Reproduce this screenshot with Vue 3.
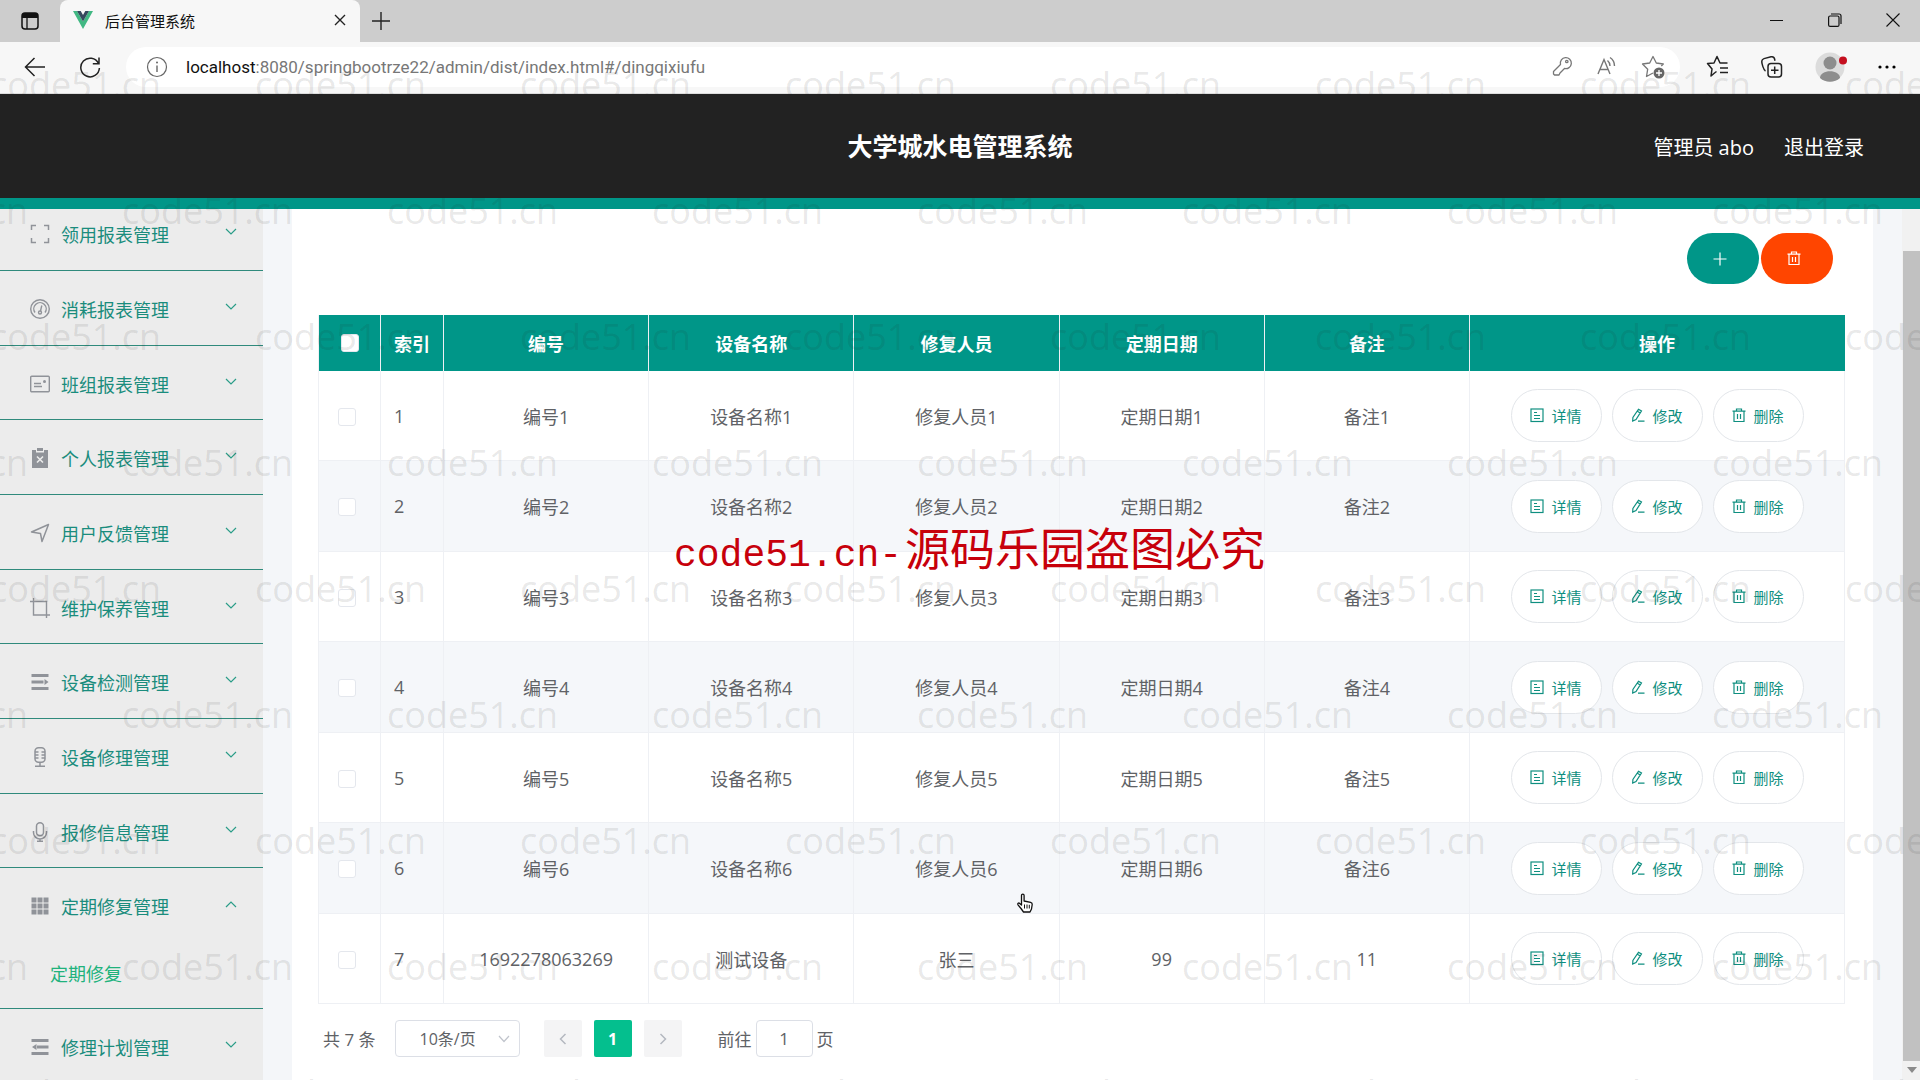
<script setup>
import { ref } from 'vue'

const menus = [
  { icon: 'full', label: '领用报表管理' },
  { icon: 'meter', label: '消耗报表管理' },
  { icon: 'card', label: '班组报表管理' },
  { icon: 'release', label: '个人报表管理' },
  { icon: 'send', label: '用户反馈管理' },
  { icon: 'crop', label: '维护保养管理' },
  { icon: 'unfold', label: '设备检测管理' },
  { icon: 'mic', label: '设备修理管理' },
  { icon: 'voice', label: '报修信息管理' },
  { icon: 'grid', label: '定期修复管理', children: ['定期修复'] },
  { icon: 'fold', label: '修理计划管理' },
]

const icons = {
  full: '<path d="M1.500 6V1.500H6M14 1.500h4.500V6M18.500 14v4.500H14M6 18.500H1.500V14" fill="none" stroke="currentColor" stroke-width="1.500"/>',
  meter: '<g fill="none" stroke="currentColor" stroke-width="1.400"><circle cx="10" cy="10" r="9.300"/><path d="M5 13.500a6.200 6.200 0 1 1 10 0M10.500 12l1.300-5.500"/><circle cx="10" cy="13.500" r="1.500"/></g>',
  card: '<g fill="none" stroke="currentColor" stroke-width="1.400"><rect x=".7" y="2.200" width="18.600" height="15.600" rx="1"/><path d="M4 9.500h7M4 12.500h8"/></g><circle cx="14.500" cy="7.500" r="1.500" fill="currentColor"/>',
  release: '<path d="M2 2h4v2.500h8V2h4v18H2zM7 0h6v3H7z" fill="currentColor"/><path d="M7 8.500l6 6M13 8.500l-6 6" stroke="#ececec" stroke-width="1.600"/>',
  send: '<path d="M18.500 1.500L1.500 9l9 1.500 1.500 8z" fill="none" stroke="currentColor" stroke-width="1.500" stroke-linejoin="round"/>',
  crop: '<path d="M0 3.500h16.500V20M3.500 0v17H20" fill="none" stroke="currentColor" stroke-width="1.400"/>',
  unfold: '<path d="M1.500 2h17v3h-17zM1.500 8.500h12v3h-12zM1.500 15h17v3h-17zM14.500 7l4 3-4 3z" fill="currentColor"/>',
  mic: '<g fill="none" stroke="currentColor" stroke-width="1.500"><rect x="5" y=".8" width="10" height="14.500" rx="3.500"/><path d="M5 5h3.500M11.500 5H15M5 8h3.500M11.500 8H15M5 11h3.500M11.500 11H15M10 15.500v4M5 19.300h10"/></g>',
  voice: '<g fill="none" stroke="currentColor" stroke-width="1.500"><rect x="6.500" y=".8" width="7" height="13" rx="3.500"/><path d="M3.500 9v1.500a6.500 6.500 0 0 0 13 0V9M10 17v2.500M7 19.300h6"/></g>',
  grid: '<path d="M1.500 1.500h5v5h-5zM7.500 1.500h5v5h-5zM13.500 1.500h5v5h-5zM1.500 7.500h5v5h-5zM7.500 7.500h5v5h-5zM13.500 7.500h5v5h-5zM1.500 13.500h5v5h-5zM7.500 13.500h5v5h-5zM13.500 13.500h5v5h-5z" fill="currentColor"/>',
  fold: '<path d="M1.500 2h17v3h-17zM7 8.500h11.500v3H7zM1.500 15h17v3h-17zM6.500 7v6L2 10z" fill="currentColor"/>',
  detail: '<g fill="none" stroke="currentColor" stroke-width="1.200"><rect x="1" y="1" width="12" height="12.500"/><path d="M4 4.500h3M4 7.500h6M4 10.500h6"/></g>',
  edit: '<g fill="none" stroke="currentColor" stroke-width="1.200"><path d="M7.500 1.200l3 1.700-5.500 8.600L1.700 13l.2-3.500zM6.300 3.200l3 1.800M7 13.200h6.500"/></g>',
  trash: '<g fill="none" stroke="currentColor" stroke-width="1.200"><path d="M.5 3.200h13M4.500 3V1h5v2M2 3.500v10h10v-10M5.500 6v5M8.500 6v5"/></g>',
}

const columns = ['编号', '设备名称', '修复人员', '定期日期', '备注']
const rows = [1, 2, 3, 4, 5, 6].map((n) => columns.map((c) => c + n))
rows.push(['1692278063269', '测试设备', '张三', '99', '11'])

const actions = [
  { icon: 'detail', label: '详情' },
  { icon: 'edit', label: '修改' },
  { icon: 'trash', label: '删除' },
]
const pageNo = ref('1')
</script>

<template>
  <div class="window">
    <div class="tabbar">
      <button class="bare tab-menu" aria-label="标签页菜单">
        <svg width="20" height="20" viewBox="0 0 20 20"><rect x="2" y="2" width="16" height="16" rx="3" fill="none" stroke="#111" stroke-width="1.500" /><path d="M2 7V4.500A2.500 2.500 0 0 1 4.500 2h11A2.500 2.500 0 0 1 18 4.500V7z" fill="#111" /><path d="M7 7v11" stroke="#111" stroke-width="1.300" /></svg>
      </button>
      <div class="tab">
        <svg width="20" height="18" viewBox="0 0 20 18"><path d="M0 0h4l6 10.500L16 0h4L10 18z" fill="#41b883" /><path d="M4 0h3.700L10 4l2.300-4H16l-6 10.500z" fill="#35495e" /></svg>
        <span class="tab-title">后台管理系统</span>
        <button class="bare" aria-label="关闭标签页">
          <svg width="12" height="12" viewBox="0 0 12 12"><path d="M1 1l10 10M11 1L1 11" stroke="#222" stroke-width="1.400" /></svg>
        </button>
      </div>
      <button class="bare new-tab" aria-label="新建标签页">
        <svg width="18" height="18" viewBox="0 0 18 18"><path d="M9 0v18M0 9h18" stroke="#222" stroke-width="1.400" /></svg>
      </button>
      <div class="win-controls">
        <button class="bare" aria-label="最小化"><svg width="14" height="14" viewBox="0 0 14 14"><path d="M0 7.500h13" stroke="#111" /></svg></button>
        <button class="bare" aria-label="还原"><svg width="14" height="14" viewBox="0 0 14 14"><g fill="none" stroke="#111" stroke-width="1.200"><rect x=".6" y="3" width="10.400" height="10.400" rx="1.500" /><path d="M3 1h8a2 2 0 0 1 2 2v8" /></g></svg></button>
        <button class="bare" aria-label="关闭"><svg width="14" height="14" viewBox="0 0 14 14"><path d="M.5.5l13 13M13.500.5l-13 13" stroke="#111" stroke-width="1.100" /></svg></button>
      </div>
    </div>

    <div class="toolbar">
      <button class="bare nav" aria-label="后退"><svg width="22" height="22" viewBox="0 0 22 22"><path d="M21 11H2M10.500 2L1.500 11l9 9" fill="none" stroke="#222" stroke-width="1.500" /></svg></button>
      <button class="bare nav" aria-label="刷新"><svg width="22" height="22" viewBox="0 0 22 22"><path d="M19.500 7.500a9.300 9.300 0 1 0 .9 4.500M20 1.500v6.200h-6.200" fill="none" stroke="#222" stroke-width="1.500" /></svg></button>
      <div class="address">
        <svg width="22" height="22" viewBox="0 0 22 22"><circle cx="11" cy="11" r="9.500" fill="none" stroke="#666" stroke-width="1.200" /><path d="M11 9.500V16" stroke="#666" stroke-width="1.400" /><circle cx="11" cy="6.500" r="1" fill="#666" /></svg>
        <span class="url"><b>localhost</b>:8080/springbootrze22/admin/dist/index.html#/dingqixiufu</span>
        <div class="address-icons">
          <svg width="22" height="22" viewBox="0 0 22 22"><g fill="none" stroke="#777" stroke-width="1.300"><path d="M9.500 9.500a5.500 5.500 0 1 1 4 4L9 18l-1 2H3.500l-1-1v-2.500z" stroke-linejoin="round" /><circle cx="15.800" cy="6.500" r="1.200" /></g></svg>
          <svg width="22" height="22" viewBox="0 0 22 22"><g fill="none" stroke="#777" stroke-width="1.400"><path d="M2 19L8 4.500 14 19M4 14.500h8M11.500 5.500a7 7 0 0 1 2.500 5.500M14 2.500A10 10 0 0 1 18.500 11" /></g></svg>
          <svg width="24" height="24" viewBox="0 0 24 24"><path d="M12 18l-6.500 3.500 1.200-7.300L1.500 9l7.200-1L12 1.500 15.300 8l7 1-2 2" fill="none" stroke="#777" stroke-width="1.300" stroke-linejoin="round" /><circle cx="18" cy="18" r="5.500" fill="#666" /><path d="M18 15v6M15 18h6" stroke="#fff" stroke-width="1.300" /></svg>
        </div>
      </div>
      <div class="browser-icons">
        <button class="bare" aria-label="收藏夹"><svg width="24" height="24" viewBox="0 0 24 24"><path d="M8.500 18L5 21l1-7L1.500 8.500 8 8l3-6.500L14 8h7.500M14 13h8M14 17.500h8M8.500 18l2-1.500" fill="none" stroke="#222" stroke-width="1.500" stroke-linejoin="round" /></svg></button>
        <button class="bare" aria-label="集锦"><svg width="24" height="24" viewBox="0 0 24 24"><g fill="none" stroke="#222" stroke-width="1.500"><rect x="8" y="8.500" width="13.500" height="13.500" rx="3" /><path d="M14.700 11.500v7.500M11 15.200h7.500M5.500 16C3.500 15 1.500 8 1.800 6c.2-1.500 1-2 2.200-2.400L11 1.800c2-.4 3.200.5 3.500 2l.5 2" /></g></svg></button>
        <button class="bare" aria-label="个人资料"><svg width="34" height="32" viewBox="0 0 34 32"><circle cx="16" cy="16" r="14.500" fill="#dcdcdc" /><circle cx="16" cy="12" r="6.500" fill="#8d8d8d" /><path d="M6 27c0-9 20-9 20 0a15 15 0 0 1-20 0z" fill="#8d8d8d" /><circle cx="29" cy="9.500" r="4" fill="#c50f1f" /></svg></button>
        <button class="bare" aria-label="更多"><svg width="18" height="6" viewBox="0 0 18 6"><circle cx="2" cy="3" r="1.600" /><circle cx="9" cy="3" r="1.600" /><circle cx="16" cy="3" r="1.600" /></svg></button>
      </div>
    </div>

    <header class="header">
      <h1>大学城水电管理系统</h1>
      <div class="user">
        <span>管理员 abo</span>
        <a href="#/login">退出登录</a>
      </div>
    </header>

    <div class="body">
      <nav class="sidebar">
        <ul class="menu">
          <li v-for="m in menus" :key="m.label">
            <button class="bare menu-title">
              <svg class="menu-icon" width="20" height="20" viewBox="0 0 20 20" v-html="icons[m.icon]" />
              <span>{{ m.label }}</span>
              <svg class="chevron" :class="{ open: m.children }" width="12" height="8" viewBox="0 0 12 8"><path d="M1 1l5 5 5-5" fill="none" stroke="#2a9d88" stroke-width="1.200" /></svg>
            </button>
            <a v-for="c in m.children" :key="c" class="submenu" href="#/dingqixiufu">{{ c }}</a>
          </li>
        </ul>
      </nav>

      <main class="main">
        <section class="card">
          <div class="top-actions">
            <button class="round add" aria-label="新增"><svg width="14" height="14" viewBox="0 0 14 14"><path d="M7 .5v13M.5 7h13" stroke="#fff" stroke-width="1.200" /></svg></button>
            <button class="round remove" aria-label="批量删除"><svg width="14" height="15" viewBox="0 0 14 15" v-html="icons.trash" /></button>
          </div>

          <table>
            <colgroup>
              <col class="c-check" /><col class="c-index" />
              <col v-for="c in columns" :key="c" class="c-data" />
              <col class="c-ops" />
            </colgroup>
            <thead>
              <tr>
                <th class="check"><input type="checkbox" aria-label="全选" /></th>
                <th class="index">索引</th>
                <th v-for="c in columns" :key="c">{{ c }}</th>
                <th>操作</th>
              </tr>
            </thead>
            <tbody>
              <tr v-for="(r, i) in rows" :key="i">
                <td class="check"><input type="checkbox" :aria-label="'选择第' + (i + 1) + '行'" /></td>
                <td class="index">{{ i + 1 }}</td>
                <td v-for="(v, j) in r" :key="j">{{ v }}</td>
                <td>
                  <div class="ops">
                    <button v-for="a in actions" :key="a.label" class="op">
                      <svg width="14" height="15" viewBox="0 0 14 15" v-html="icons[a.icon]" />{{ a.label }}
                    </button>
                  </div>
                </td>
              </tr>
            </tbody>
          </table>

          <div class="pagination">
            <span>共 7 条</span>
            <div class="size">
              <select aria-label="每页条数"><option>10条/页</option></select>
              <svg width="12" height="8" viewBox="0 0 12 8"><path d="M1 1l5 5.500L11 1" fill="none" stroke="#c0c4cc" stroke-width="1.200" /></svg>
            </div>
            <div class="pager">
              <button aria-label="上一页"><svg width="8" height="12" viewBox="0 0 8 12"><path d="M6.500 1l-5 5 5 5" fill="none" stroke="#b4b8c0" stroke-width="1.500" /></svg></button>
              <button class="active">1</button>
              <button aria-label="下一页"><svg width="8" height="12" viewBox="0 0 8 12"><path d="M1.500 1l5 5-5 5" fill="none" stroke="#b4b8c0" stroke-width="1.500" /></svg></button>
            </div>
            <label class="jump">前往<input v-model="pageNo" type="text" />页</label>
          </div>
        </section>
      </main>

      <div class="scrollbar">
        <div class="thumb"></div>
        <svg width="10" height="6" viewBox="0 0 10 6"><path d="M0 0h10L5 6z" fill="#8a8a8a" /></svg>
      </div>
    </div>

    <div class="watermarks" aria-hidden="true">
      <div v-for="r in 9" :key="r" class="mark-row">
        <span v-for="n in 8" :key="n">code51.cn</span>
      </div>
    </div>
    <p class="notice"><span>code51.cn-</span>源码乐园盗图必究</p>
    <svg class="cursor" width="18" height="20" viewBox="0 0 18 20"><path d="M5.500 12V2.500a1.300 1.300 0 0 1 2.600 0V8l6.500 1.300c1.300.3 1.700 1 1.600 2.200l-.7 4.500-1.500 3H7.500L5 15.500l-3-3.700c-.8-1.200.6-2.300 1.700-1.400z" fill="#fff" stroke="#111" stroke-width="1.300" stroke-linejoin="round" /><path d="M8.500 11.500v4M11 11.500v4M13.300 11.800v3.700" stroke="#111" /></svg>
  </div>
</template>

<style>
body {
  margin: 0;
  overflow: hidden;
}
</style>

<style scoped>
* {
  box-sizing: border-box;
}
.window {
  position: relative;
  display: flex;
  flex-direction: column;
  height: 100vh;
  overflow: hidden;
  background: #fff;
  font-family: "Open Sans", "Noto Sans CJK SC", sans-serif;
  font-size: 18px;
  color: #606266;
}
button, input, select {
  font: inherit;
  color: inherit;
}
svg {
  display: block;
  flex: none;
}
a {
  text-decoration: none;
}
.bare {
  display: flex;
  align-items: center;
  justify-content: center;
  padding: 0;
  border: 0;
  background: none;
}

/* browser chrome */
.tabbar {
  display: flex;
  flex: none;
  height: 42px;
  background: #cdcdcd;
}
.tab-menu {
  width: 60px;
}
.tab {
  display: flex;
  align-items: center;
  width: 300px;
  padding: 0 14px 2px 13px;
  border-radius: 8px 8px 0 0;
  background: #f7f7f7;
  font-size: 15px;
  color: #111;
}
.tab-title {
  flex: 1;
  margin-left: 12px;
}
.new-tab {
  width: 42px;
}
.win-controls {
  display: flex;
  margin-left: auto;
}
.win-controls button {
  width: 58px;
  padding: 0 0 2px 4px;
}
.toolbar {
  display: flex;
  flex: none;
  align-items: center;
  height: 52px;
  padding: 0 24px 2px;
  border-bottom: 1px solid #ddd;
  background: #f7f7f7;
}
.nav {
  margin-right: 33px;
}
.address {
  display: flex;
  flex: 1;
  align-items: center;
  height: 40px;
  margin-left: -8px;
  padding: 0 15px 0 20px;
  border-radius: 20px;
  background: #fff;
}
.url {
  margin-left: 18px;
  font-family: Roboto, sans-serif;
  font-size: 17px;
  color: #777;
}
.url b {
  font-weight: 400;
  color: #111;
}
.address-icons {
  display: flex;
  gap: 23px;
  margin-left: auto;
}
.browser-icons {
  display: flex;
  align-items: center;
  gap: 30px;
  margin-left: 26px;
}

/* page header */
.header {
  display: grid;
  grid-template-columns: 1fr auto 1fr;
  align-items: center;
  flex: none;
  height: 115px;
  padding: 0 56px;
  border-bottom: 11px solid #009688;
  background: #222;
  color: #fff;
}
h1 {
  grid-column: 2;
  margin: 0;
  font-size: 25px;
  line-height: 36px;
}
.user {
  display: flex;
  justify-content: flex-end;
  gap: 30px;
  font-size: 20px;
}
.user a {
  color: inherit;
}

/* sidebar */
.body {
  display: flex;
  flex: 1;
  min-height: 0;
  background: #f4f6f9;
}
.sidebar {
  flex: none;
  width: 263px;
  overflow: hidden;
  background: #ececec;
}
.menu {
  margin: -13px 0 0;
  padding: 0;
  list-style: none;
}
.menu li {
  border-bottom: 1px solid #2f8a7c;
}
.menu-title {
  justify-content: flex-start;
  width: 100%;
  height: 74px;
  padding: 2px 26px 0 30px;
  color: #1a8c7d;
}
.menu li:nth-child(3n) .menu-title {
  height: 73px;
}
.menu-icon {
  margin-right: 11px;
  color: #909399;
}
.chevron {
  margin: 0 0 4px auto;
}
.chevron.open {
  transform: rotate(180deg);
}
.submenu {
  display: flex;
  align-items: center;
  height: 66px;
  padding: 0 0 4px 50px;
  color: #20b27c;
}

/* content */
.main {
  display: flex;
  flex: 1;
  min-width: 0;
  padding: 0 29px;
}
.card {
  flex: 1;
  min-width: 0;
  padding: 24px 28px 0 26px;
  background: #fff;
}
.top-actions {
  display: flex;
  justify-content: flex-end;
  gap: 2px;
  margin: 0 12px 31px;
}
.round {
  display: flex;
  align-items: center;
  justify-content: center;
  width: 72px;
  height: 51px;
  padding: 0 7px 0 0;
  border: 0;
  border-radius: 26px;
  color: #fff;
}
.add {
  background: #009688;
}
.remove {
  background: #ff4500;
}
table {
  width: 100%;
  table-layout: fixed;
  border-collapse: separate;
  border-spacing: 0;
  border-left: 1px solid #eef0f4;
}
.c-check {
  width: 62px;
}
.c-index {
  width: 63px;
}
.c-ops {
  width: 375px;
}
th, td {
  padding: 0;
  border-right: 1px solid #eef0f4;
  text-align: center;
}
th {
  height: 56px;
  background: #009688;
  color: #fff;
  font-weight: 700;
}
th:last-child {
  border-right-color: #009688;
}
td {
  height: 90px;
  border-bottom: 1px solid #eef0f4;
}
tbody tr:nth-child(even) td {
  height: 91px;
  background: #f5f7fa;
}
.index {
  padding-left: 13px;
  text-align: left;
}
.check input {
  display: block;
  width: 18px;
  height: 18px;
  margin: 2px auto 0 19px;
  border: 1px solid #e4e7ed;
  border-radius: 3px;
  background: #fff;
  appearance: none;
}
th.check input {
  margin: 0 auto 0 22px;
}
.ops {
  display: flex;
  justify-content: center;
  gap: 10px;
}
.op {
  display: flex;
  align-items: center;
  justify-content: center;
  gap: 7px;
  width: 91px;
  height: 53px;
  padding: 0;
  border: 1px solid #e3e6ea;
  border-radius: 27px;
  background: #fff;
  color: #0f8f80;
  font-size: 15px;
}
.pagination {
  display: flex;
  align-items: center;
  height: 37px;
  margin-top: 16px;
  padding-left: 5px;
  font-size: 17px;
}
.size {
  display: flex;
  align-items: center;
  margin-left: 19px;
}
.size select {
  width: 125px;
  height: 37px;
  padding: 0 24px;
  border: 1px solid #dcdfe6;
  border-radius: 4px;
  background: #fff;
  font-size: 16px;
  appearance: none;
}
.size svg {
  margin-left: -22px;
  pointer-events: none;
}
.pager {
  display: flex;
  gap: 12px;
  margin-left: 34px;
}
.pager button {
  display: flex;
  align-items: center;
  justify-content: center;
  width: 38px;
  height: 37px;
  padding: 0;
  border: 0;
  border-radius: 2px;
  background: #f4f4f5;
}
.pager .active {
  background: #04bf8e;
  color: #fff;
  font-size: 16px;
  font-weight: 700;
}
.jump {
  display: flex;
  align-items: center;
  margin-left: 36px;
}
.jump input {
  width: 57px;
  height: 37px;
  margin: 0 4px;
  padding: 0;
  border: 1px solid #dcdfe6;
  border-radius: 4px;
  background: #fff;
  text-align: center;
}
.scrollbar {
  display: flex;
  flex: none;
  flex-direction: column;
  align-items: center;
  width: 18px;
  padding: 42px 0 7px 1px;
  background: #f1f1f1;
}
.thumb {
  flex: 1;
  width: 100%;
  margin-bottom: 6px;
  background: #c1c1c1;
}

/* overlays */
.watermarks {
  position: absolute;
  inset: 0;
  overflow: hidden;
  padding-top: 22px;
  pointer-events: none;
}
.mark-row {
  display: flex;
  height: 126px;
  margin-left: -10px;
  color: rgba(34, 34, 34, 0.11);
  font-size: 36px;
  line-height: 126px;
}
.mark-row:nth-child(even) {
  margin-left: -143px;
}
.mark-row span {
  flex: none;
  width: 265px;
}
.notice {
  position: absolute;
  top: 516px;
  left: 674px;
  margin: 0;
  color: #c7000b;
  font-size: 45px;
  line-height: 66px;
  white-space: nowrap;
  pointer-events: none;
}
.notice span {
  margin-right: 3px;
  font-family: "Liberation Mono", monospace;
  font-size: 38px;
}
.cursor {
  position: absolute;
  top: 893px;
  left: 1016px;
  pointer-events: none;
}
</style>
